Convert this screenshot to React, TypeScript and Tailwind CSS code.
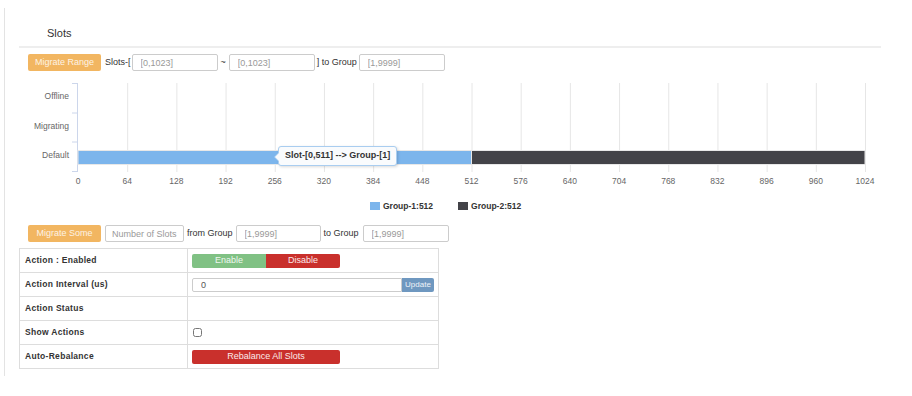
import React from "react";

const ticks = Array.from({ length: 17 }, (_, i) => i * 64);
const scale = 787 / 1024;

function Field({ width, placeholder, value }: { width: string; placeholder?: string; value?: string }) {
  return (
    <input
      readOnly
      placeholder={placeholder}
      value={value}
      className={`${width} h-[17px] border border-[#ccc] rounded-[2px] text-[9px] text-[#555] placeholder:text-[#999] outline-none bg-white`}
    />
  );
}

function OrangeButton({ label }: { label: string }) {
  return (
    <button className="w-[73px] h-[17px] rounded-[2px] bg-[#f2b661] text-[9px] text-[#fdf3e4] leading-none">
      {label}
    </button>
  );
}

function SlotsChart() {
  return (
    <div className="mt-[12px]">
      <div className="flex">
        <div className="w-[50px] h-[89px] grid grid-rows-3 text-[8.5px] text-[#666] text-right">
          <div className="flex items-center justify-end pb-[3px]">Offline</div>
          <div className="flex items-center justify-end pb-[3px]">Migrating</div>
          <div className="flex items-center justify-end pb-[3px]">Default</div>
        </div>
        <div className="relative ml-[3px]">
          <svg width="794" height="89" className="block">
            {[0.5, 30, 59, 88.5].map((y) => (
              <line key={y} x1="0" x2="6" y1={y} y2={y} stroke="#ccd6eb" strokeWidth="1" />
            ))}
            <line x1="5.5" x2="5.5" y1="0" y2="89" stroke="#ccd6eb" strokeWidth="1" />
            {ticks.slice(1).map((t) => (
              <line
                key={t}
                x1={6.5 + t * scale}
                x2={6.5 + t * scale}
                y1="0"
                y2="89"
                stroke="#e6e6e6"
                strokeWidth="1"
              />
            ))}
            <rect x="6" y="67.5" width={512 * scale} height="14" fill="#7cb5ec" stroke="#e8e8e8" strokeWidth="1" />
            <rect x={6 + 512 * scale} y="67.5" width={512 * scale} height="14" fill="#434348" stroke="#e8e8e8" strokeWidth="1" />
          </svg>
          {/* tooltip */}
          <div className="absolute left-[206px] top-[63px] h-[20px] px-[6px] flex items-center rounded-[3px] border border-[#a9cdf0] bg-[#f9fbfd] shadow-[1px_1px_3px_rgba(0,0,0,0.15)] text-[9px] font-bold text-[#333] whitespace-nowrap">
            <span className="absolute -left-[5px] top-[5px] w-0 h-0 border-y-[5px] border-y-transparent border-r-[5px] border-r-[#a9cdf0]" />
            <span className="absolute -left-[4px] top-[5px] w-0 h-0 border-y-[5px] border-y-transparent border-r-[5px] border-r-[#f9fbfd]" />
            Slot-[0,511] --&gt; Group-[1]
          </div>
        </div>
      </div>
      <div className="relative h-[12px] mt-[3px] text-[8.5px] text-[#666]">
        {ticks.map((t) => (
          <span
            key={t}
            className="absolute top-0 -translate-x-1/2"
            style={{ left: 59 + t * scale }}
          >
            {t}
          </span>
        ))}
      </div>
      <div className="flex items-center gap-[25px] ml-[351px] mt-[13px] h-[12px] text-[8.5px] font-bold text-[#333]">
        <div className="flex items-center gap-[3px]">
          <span className="w-[10px] h-[8px] bg-[#7cb5ec]" />
          Group-1:512
        </div>
        <div className="flex items-center gap-[3px]">
          <span className="w-[10px] h-[8px] bg-[#434348]" />
          Group-2:512
        </div>
      </div>
    </div>
  );
}

function Row({ label, children, last }: { label: string; children?: React.ReactNode; last?: boolean }) {
  return (
    <div className={`flex h-[23px] box-content ${last ? "" : "border-b border-[#ddd]"}`}>
      <div className="w-[168px] border-r border-[#ddd] pl-[5px] flex items-center text-[8.5px] font-bold tracking-[0.3px] text-[#333]">
        {label}
      </div>
      <div className="flex-1 pl-[4px] pr-[4px] flex items-center">{children}</div>
    </div>
  );
}

export default function App() {
  return (
    <div className="w-[912px] h-[396px] bg-white pt-2 pl-1 font-['Liberation_Sans',Arial,sans-serif] text-[#333]">
      <div className="h-[368px] border-l border-[#e3e3e3] pl-[14px] pr-[31px]">
        <div className="h-[38px] flex items-end pb-[6px] pl-[28px] text-[11px] leading-[13px]">Slots</div>
        <div className="h-[2px] bg-[#eee]" />

        <div className="mt-[6px] h-[17px] pl-[9px] flex items-center text-[9px]">
          <OrangeButton label="Migrate Range" />
          <span className="ml-[4px] mr-[1px]">Slots-[</span>
          <Field width="w-[86px] px-[8px]" placeholder="[0,1023]" />
          <span className="mx-[3px]">~</span>
          <Field width="w-[86px] px-[8px]" placeholder="[0,1023]" />
          <span className="ml-[2px] mr-[2px]">] to Group</span>
          <Field width="w-[86px] px-[8px]" placeholder="[1,9999]" />
        </div>

        <SlotsChart />

        <div className="mt-[13px] h-[17px] pl-[9px] flex items-center text-[9px]">
          <OrangeButton label="Migrate Some" />
          <Field width="w-[79px] ml-[4px] px-[6px]" placeholder="Number of Slots" />
          <span className="ml-[3px] mr-[3px]">from Group</span>
          <Field width="w-[85px] px-[8px]" placeholder="[1,9999]" />
          <span className="ml-[3px] mr-[4px]">to Group</span>
          <Field width="w-[86px] px-[8px]" placeholder="[1,9999]" />
        </div>

        <div className="mt-[6px] w-[420px] border border-[#ddd]">
          <Row label="Action : Enabled">
            <div className="flex h-[14px] text-[9px] text-[#fbeaea]">
              <button className="w-[74px] rounded-l-[2px] bg-[#80c184] text-[#eef7ef]">Enable</button>
              <button className="w-[74px] rounded-r-[2px] bg-[#c9302c]">Disable</button>
            </div>
          </Row>
          <Row label="Action Interval (us)">
            <div className="flex h-[14px]">
              <input
                readOnly
                value="0"
                className="w-[210px] h-[14px] border border-[#ccc] rounded-l-[2px] pl-[8px] text-[9px] text-[#555] outline-none"
              />
              <button className="w-[32px] h-[14px] rounded-r-[2px] bg-[#6f98c0] text-[8px] text-[#eef3f8]">Update</button>
            </div>
          </Row>
          <Row label="Action Status" />
          <Row label="Show Actions">
            <input type="checkbox" className="w-[9px] h-[9px] m-0 ml-[1px]" />
          </Row>
          <Row label="Auto-Rebalance" last>
            <button className="w-[148px] h-[14px] rounded-[2px] bg-[#c9302c] text-[9px] text-[#fbeaea]">
              Rebalance All Slots
            </button>
          </Row>
        </div>
      </div>
    </div>
  );
}
